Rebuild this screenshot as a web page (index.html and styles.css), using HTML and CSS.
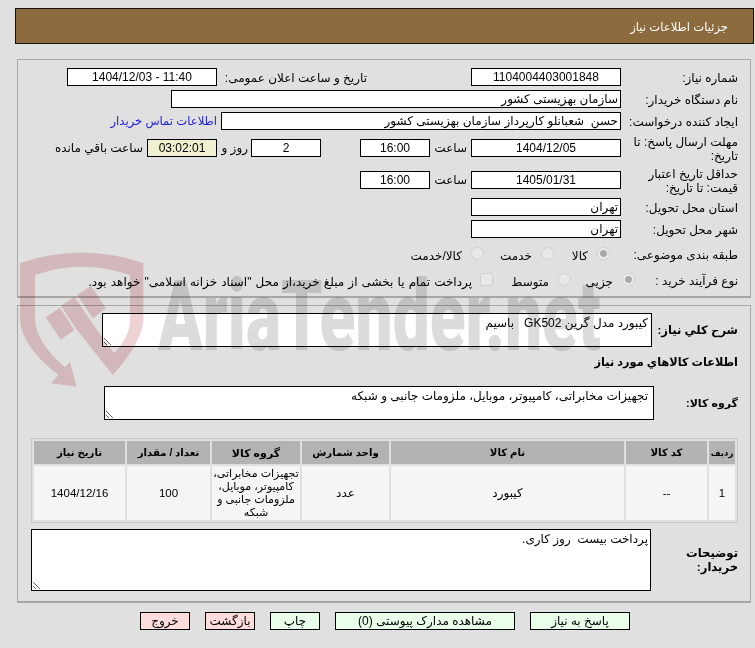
FILE: index.html
```html
<!DOCTYPE html>
<html lang="fa" dir="rtl">
<head>
<meta charset="utf-8">
<meta name="viewport" content="width=device-width, initial-scale=1">
<title>جزئیات اطلاعات نیاز</title>
<link rel="stylesheet" href="styles.css">
</head>
<body>

<div class="page">

  <div class="header">جزئیات اطلاعات نیاز</div>

  <div class="panel panel-top">
    <div class="row">
      <div class="label">شماره نیاز:</div>
      <div class="field w150 center num">1104004403001848</div>
      <div class="side-label">تاریخ و ساعت اعلان عمومی:</div>
      <div class="field w150 center num">11:40 - 1404/12/03</div>
    </div>
    <div class="row">
      <div class="label">نام دستگاه خریدار:</div>
      <div class="field w450">سازمان بهزیستی کشور</div>
    </div>
    <div class="row">
      <div class="label">ایجاد کننده درخواست:</div>
      <div class="field w400">حسن  شعبانلو کارپرداز سازمان بهزیستی کشور</div>
      <a class="contact" href="#">اطلاعات تماس خریدار</a>
    </div>
    <div class="row tall">
      <div class="label">مهلت ارسال پاسخ: تا تاریخ:</div>
      <div class="field w150 center num">1404/12/05</div>
      <div class="time-label">ساعت</div>
      <div class="field w70 center num">16:00</div>
      <div class="field w70 center num days">2</div>
      <div class="day-label">روز و</div>
      <div class="field w70 center num remain">03:02:01</div>
      <div class="remain-label">ساعت باقي مانده</div>
    </div>
    <div class="row tall">
      <div class="label">حداقل تاریخ اعتبار قیمت: تا تاریخ:</div>
      <div class="field w150 center num">1405/01/31</div>
      <div class="time-label">ساعت</div>
      <div class="field w70 center num">16:00</div>
    </div>
    <div class="row">
      <div class="label">استان محل تحویل:</div>
      <div class="field w150">تهران</div>
    </div>
    <div class="row">
      <div class="label">شهر محل تحویل:</div>
      <div class="field w150">تهران</div>
    </div>
    <div class="row choice">
      <div class="label">طبقه بندی موضوعی:</div>
      <label class="opt opt-kala"><input type="radio" name="cat" checked disabled>کالا</label>
      <label class="opt opt-khedmat"><input type="radio" name="cat" disabled>خدمت</label>
      <label class="opt"><input type="radio" name="cat" disabled>کالا/خدمت</label>
    </div>
    <div class="row choice">
      <div class="label">نوع فرآیند خرید :</div>
      <label class="opt opt-jozi"><input type="radio" name="proc" checked disabled>جزیی</label>
      <label class="opt opt-motavaset"><input type="radio" name="proc" disabled>متوسط</label>
      <label class="opt opt-long"><input type="checkbox" disabled>پرداخت تمام یا بخشی از مبلغ خرید،از محل "اسناد خزانه اسلامی" خواهد بود.</label>
    </div>
  </div>

  <div class="panel panel-bottom">
    <div class="block-row">
      <div class="b-label l86">شرح کلي نياز:</div>
      <textarea class="box h34 w550 pad3" readonly>کیبورد مدل گرین GK502   باسیم</textarea>
    </div>
    <div class="section-title">اطلاعات کالاهاي مورد نياز</div>
    <div class="block-row group-row">
      <div class="b-label l84">گروه کالا:</div>
      <textarea class="box h34 w550 pad5" readonly>تجهیزات مخابراتی، کامپیوتر، موبایل، ملزومات جانبی و شبکه</textarea>
    </div>

    <table class="goods">
      <thead>
        <tr>
          <th class="c1">ردیف</th>
          <th class="c2">کد کالا</th>
          <th class="c3">نام کالا</th>
          <th class="c4">واحد شمارش</th>
          <th class="c5">گروه کالا</th>
          <th class="c6">تعداد / مقدار</th>
          <th class="c7">تاریخ نیاز</th>
        </tr>
      </thead>
      <tbody>
        <tr>
          <td class="num">1</td>
          <td class="num">--</td>
          <td>کیبورد</td>
          <td>عدد</td>
          <td class="small">تجهیزات مخابراتی، کامپیوتر، موبایل، ملزومات جانبی و شبکه</td>
          <td class="num">100</td>
          <td class="num">1404/12/16</td>
        </tr>
      </tbody>
    </table>

    <div class="block-row note-row">
      <div class="b-label l87">توضیحات خریدار:</div>
      <textarea class="box h62 w620" readonly>پرداخت بیست  روز کاری.</textarea>
    </div>
  </div>

  <div class="buttons">
    <button class="btn green w100">پاسخ به نیاز</button>
    <button class="btn green w180">مشاهده مدارک پیوستی (0)</button>
    <button class="btn green w50">چاپ</button>
    <button class="btn pink w50">بازگشت</button>
    <button class="btn pink w50">خروج</button>
  </div>

  <!-- watermark, blended over the form -->
  <svg class="wm-logo" viewBox="0 0 450 480" aria-hidden="true">
    <path fill="#efd2d4" d="M15 70 Q200 5 385 70 L385 240 Q380 310 293 405 L180 262 L138 197 L178 170 L240 262 L297 340 Q345 290 345 240 L345 105 Q200 55 60 105 L60 240 Q65 310 150 382 L165 365 L185 440 L108 430 L130 405 Q20 320 15 240 Z"/>
    <path fill="#efd2d4" d="M92 232 L135 203 L178 270 L137 299 Z"/>
    <path fill="#efd2d4" d="M187 165 L228 138 L273 205 L233 235 Z"/>
  </svg>
  <div class="wm-text" aria-hidden="true">AriaTender.net</div>

</div>

</body>
</html>
```

FILE: styles.css
```css
* {
  box-sizing: border-box;
}

body {
  margin: 0;
  background: #e0e0e0;
  color: #000;
  font-family: "Liberation Sans", "DejaVu Sans", sans-serif;
  font-size: 12px;
  line-height: 14px;
}

.page {
  position: relative;
  width: 755px;
  height: 648px;
  padding: 8px 1px 0 15px;
  background: #e0e0e0;
  overflow: hidden;
}

/* Watermark */
.wm-logo {
  position: absolute;
  left: 15px;
  top: 240px;
  width: 150px;
  height: 160px;
  mix-blend-mode: multiply;
  pointer-events: none;
}

.wm-text {
  position: absolute;
  left: 158px;
  top: 262px;
  direction: ltr;
  font-family: Roboto, sans-serif;
  font-weight: 900;
  font-size: 98px;
  line-height: 110px;
  color: #dcdcdc;
  white-space: nowrap;
  transform: scaleX(.672);
  transform-origin: left top;
  mix-blend-mode: multiply;
  pointer-events: none;
}

/* Header bar */
.header {
  position: relative;
  height: 36px;
  border: 1px solid #111;
  background: #8c6b3f;
  color: #fff;
  font-size: 11.6px;
  padding: 11px 25px 0 0;
}

/* Panels */
.panel {
  position: relative;
  margin: 0 3px 0 2px;
  border: 1px solid #a6a6a6;
  border-bottom-width: 2px;
}

.panel-top {
  margin-top: 15px;
  height: 239px;
  padding: 8px 12px 0 0;
  display: flex;
  flex-direction: column;
  gap: 4px;
}

.panel-bottom {
  margin-top: 7px;
  height: 298px;
  padding: 7px 12px 0 0;
}

/* Form rows */
.row {
  display: flex;
  align-items: center;
  height: 18px;
}

.row.tall {
  height: 28px;
}

.row.choice {
  height: 22px;
}

.label {
  width: 117px;
  padding-top: 2px;
  flex: none;
}

.choice .label {
  padding-top: 4px;
}

.field {
  flex: none;
  height: 18px;
  border: 1px solid #000;
  background: #fff;
  padding: 1px 2px 0;
  white-space: pre;
  overflow: hidden;
}

.center {
  text-align: center;
}

.num {
  font-family: "Liberation Sans", sans-serif;
}

.w150 {
  width: 150px;
}

.w70 {
  width: 70px;
}

.w400 {
  width: 400px;
}

.w450 {
  width: 450px;
}

.side-label {
  width: 150px;
  margin-right: 104px;
  padding-top: 2px;
  flex: none;
}

.contact {
  margin-right: 4px;
  color: #2222dd;
  font-size: 11.6px;
  text-decoration: none;
  white-space: nowrap;
}

.time-label {
  width: 41px;
  padding-right: 4px;
  flex: none;
}

.days {
  margin-right: 39px;
}

.day-label {
  width: 34px;
  padding-right: 3px;
  flex: none;
}

.remain {
  background: #f0f0d0;
}

.remain-label {
  margin-right: 4px;
  white-space: nowrap;
}

/* Radios and the checkbox */
.opt {
  display: flex;
  align-items: center;
  padding-top: 5px;
  white-space: nowrap;
}

.opt input {
  appearance: none;
  width: 13px;
  height: 13px;
  margin: -5px 0 0 9px;
  background: #e8e8e8;
  border: 1px solid #d0d0d0;
  flex: none;
}

.opt input[type="radio"] {
  border-radius: 50%;
}

.opt input[type="radio"]:checked {
  background: radial-gradient(circle, #a8a8a8 0 3px, #ececec 4px);
}

.opt input[type="checkbox"] {
  border-radius: 2px;
  margin-left: 8px;
}

.opt-kala {
  margin-right: 11px;
  width: 56px;
}

.opt-khedmat {
  width: 70px;
}

.opt-jozi {
  margin-right: -14px;
  width: 64px;
}

.opt-motavaset {
  width: 78px;
}

.opt-long {
  word-spacing: .8px;
}

/* Lower panel */
.block-row {
  display: flex;
  align-items: center;
}

.b-label {
  flex: none;
  font-size: 11.6px;
  font-weight: 700;
  white-space: nowrap;
}

.l86 {
  width: 86px;
}

.l84 {
  width: 84px;
  font-size: 11px;
}

.l87 {
  width: 87px;
  padding-left: 30px;
  white-space: normal;
}

.box {
  flex: none;
  display: block;
  border: 1px solid #000;
  background: #fff;
  border-radius: 0;
  padding: 2px;
  margin: 0;
  font: inherit;
  color: inherit;
  outline: none;
}

.pad3 {
  padding-right: 3px;
}

.pad5 {
  padding-right: 5px;
}

.w550 {
  width: 550px;
}

.w620 {
  width: 620px;
}

.h34 {
  height: 34px;
}

.h62 {
  height: 62px;
}

.section-title {
  margin-top: 8px;
  font-size: 11.3px;
  font-weight: 700;
}

.group-row {
  margin-top: 17px;
}

.goods {
  width: 707px;
  margin-top: 18px;
  border: 1px solid #c8c8c8;
  border-spacing: 2px;
  table-layout: fixed;
}

.goods th {
  height: 23px;
  padding: 0;
  background: #b3b3b3;
  font-size: 10.2px;
}

.goods td {
  height: 54px;
  padding: 0;
  background: #f5f5f5;
  text-align: center;
}

.goods td.num {
  font-size: 11.5px;
}

.goods .small {
  font-size: 11px;
  line-height: 13px;
}

.goods .c1 {
  width: 26px;
  font-size: 8.5px;
}

.c2 {
  width: 81px;
}

.c3 {
  width: 233px;
}

.c4 {
  width: 87px;
}

.goods .c5 {
  width: 88px;
  font-size: 11px;
}

.c6 {
  width: 83px;
}

.c7 {
  width: 91px;
}

.note-row {
  margin-top: 6px;
}

/* Bottom buttons */
.buttons {
  position: relative;
  display: flex;
  gap: 15px;
  margin: 9px 124px 0 0;
}

.btn {
  height: 18px;
  border: 1px solid #000;
  padding: 0;
  font: inherit;
  color: inherit;
  border-radius: 0;
}

.green {
  background: #eaffea;
}

.pink {
  background: #ffdcdc;
}

.w100 {
  width: 100px;
}

.w180 {
  width: 180px;
}

.w50 {
  width: 50px;
}
```
